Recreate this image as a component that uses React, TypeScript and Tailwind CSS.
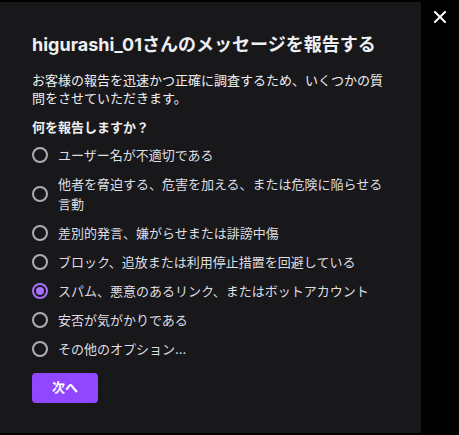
import { useState } from "react";

const options = [
  "ユーザー名が不適切である",
  "他者を脅迫する、危害を加える、または危険に陥らせる言動",
  "差別的発言、嫌がらせまたは誹謗中傷",
  "ブロック、追放または利用停止措置を回避している",
  "スパム、悪意のあるリンク、またはボットアカウント",
  "安否が気がかりである",
  "その他のオプション...",
];

const Radio = ({ checked }: { checked: boolean }) => (
  <span
    className={`flex h-4 w-4 shrink-0 items-center justify-center rounded-full border-2 ${
      checked ? "border-[#a970ff]" : "border-[#adadb8]"
    }`}
  >
    {checked && <span className="h-2 w-2 rounded-full bg-[#a970ff]" />}
  </span>
);

export default function App() {
  const [selected, setSelected] = useState(4);

  return (
    <div
      className="flex h-[435px] w-[459px] bg-black"
      style={{ fontFamily: 'Inter, "Noto Sans CJK JP", sans-serif' }}
    >
      <div className="mt-[2px] h-[431px] w-[421px] bg-[#18181b] px-8 pt-[31px] text-[#efeff1]">
        <h2 className="text-[18px] font-bold leading-6">higurashi_01さんのメッセージを報告する</h2>
        <p className="mt-[14px] text-[13px] leading-[18px]">
          お客様の報告を迅速かつ正確に調査するため、いくつかの質問をさせていただきます。
        </p>
        <h3 className="mt-[10px] text-[13px] font-bold leading-5">何を報告しますか？</h3>
        <div className="mt-2 flex flex-col gap-[9px]">
          {options.map((label, i) => (
            <label
              key={label}
              className="flex cursor-pointer items-center gap-[10px] text-[13px] leading-5 text-[#dedee3]"
              onClick={() => setSelected(i)}
            >
              <Radio checked={selected === i} />
              <span>{label}</span>
            </label>
          ))}
        </div>
        <button className="mt-[14px] h-[30px] w-[66px] rounded bg-[#9147ff] text-[13px] font-bold text-white">
          次へ
        </button>
      </div>
      <div className="flex flex-1 justify-center pt-[10px]">
        <svg width="12" height="12" viewBox="0 0 12 12" className="mt-[1px]">
          <path d="M1 1L11 11M11 1L1 11" stroke="white" strokeWidth="2" strokeLinecap="square" />
        </svg>
      </div>
    </div>
  );
}
